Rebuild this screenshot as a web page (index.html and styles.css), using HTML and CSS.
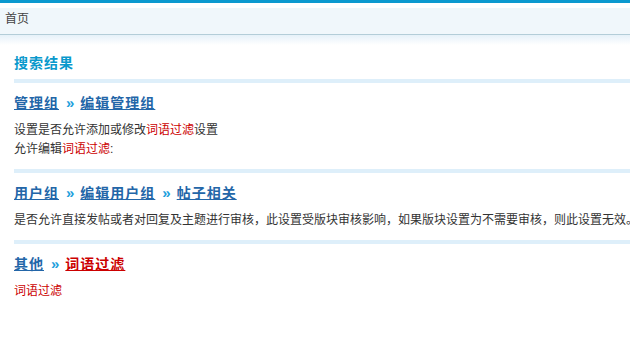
FILE: index.html
```html
<!DOCTYPE html>
<html lang="zh-CN">
<head>
    <meta charset="UTF-8">
    <title>搜索结果</title>
    <link rel="stylesheet" href="styles.css">
</head>
<body>
    <div class="topbar">
        <div class="nav">首页</div>
        <div class="nav-shade"></div>
    </div>

    <div class="container">
        <h2 class="title">搜索结果</h2>

        <div class="result">
            <h3 class="result-path">
                <a href="#">管理组</a><span class="arrow">»</span><a href="#">编辑管理组</a>
            </h3>
            <p>设置是否允许添加或修改<span class="hl">词语过滤</span>设置</p>
            <p>允许编辑<span class="hl">词语过滤</span>:</p>
        </div>

        <div class="result">
            <h3 class="result-path">
                <a href="#">用户组</a><span class="arrow">»</span><a href="#">编辑用户组</a><span class="arrow">»</span><a href="#">帖子相关</a>
            </h3>
            <p>是否允许直接发帖或者对回复及主题进行审核，此设置受版块审核影响，如果版块设置为不需要审核，则此设置无效。</p>
        </div>

        <div class="result">
            <h3 class="result-path">
                <a href="#">其他</a><span class="arrow">»</span><a href="#" class="current">词语过滤</a>
            </h3>
            <p class="hl last">词语过滤</p>
        </div>
    </div>
</body>
</html>
```

FILE: styles.css
```css
* {
    margin: 0;
    padding: 0;
    box-sizing: border-box;
}

body {
    font-family: 'Liberation Sans', 'Noto Sans CJK SC', sans-serif;
    font-size: 12px;
    color: #333;
    background: #fff;
    overflow: hidden;
}

/* barra superior */
.topbar {
    border-top: 3px solid #0b99cf;
    padding-top: 5px;
}

.nav {
    height: 27px;
    line-height: 23px;
    padding-left: 5px;
    background: #f0f7fb;
    border-bottom: 1px solid #b3cdd8;
    color: #444;
}

.nav-shade {
    height: 10px;
    background: linear-gradient(#e6f1f9, #fff);
}

.container {
    padding-left: 14px;
    white-space: nowrap;
}

.title {
    margin-top: 8px;
    margin-bottom: 6px;
    font-size: 14px;
    line-height: 20px;
    letter-spacing: 1px;
    color: #0a99cc;
}

.result {
    border-top: 4px solid #deeffa;
    padding: 10px 0 10px;
}

.result-path {
    font-size: 14px;
    line-height: 20px;
    letter-spacing: 1px;
    margin-bottom: 8px;
}

.result-path a {
    color: #2366a8;
    text-decoration: underline;
}

.result-path a.current {
    color: #c00;
}

.arrow {
    margin: 0 6px 0 7px;
    color: #1ea0dc;
    font-size: 15px;
    line-height: 1;
    letter-spacing: 0;
}

.result p {
    line-height: 19px;
    letter-spacing: 0;
}

.hl {
    color: #c00;
}

.result p.last {
    margin-top: 2px;
}
```
